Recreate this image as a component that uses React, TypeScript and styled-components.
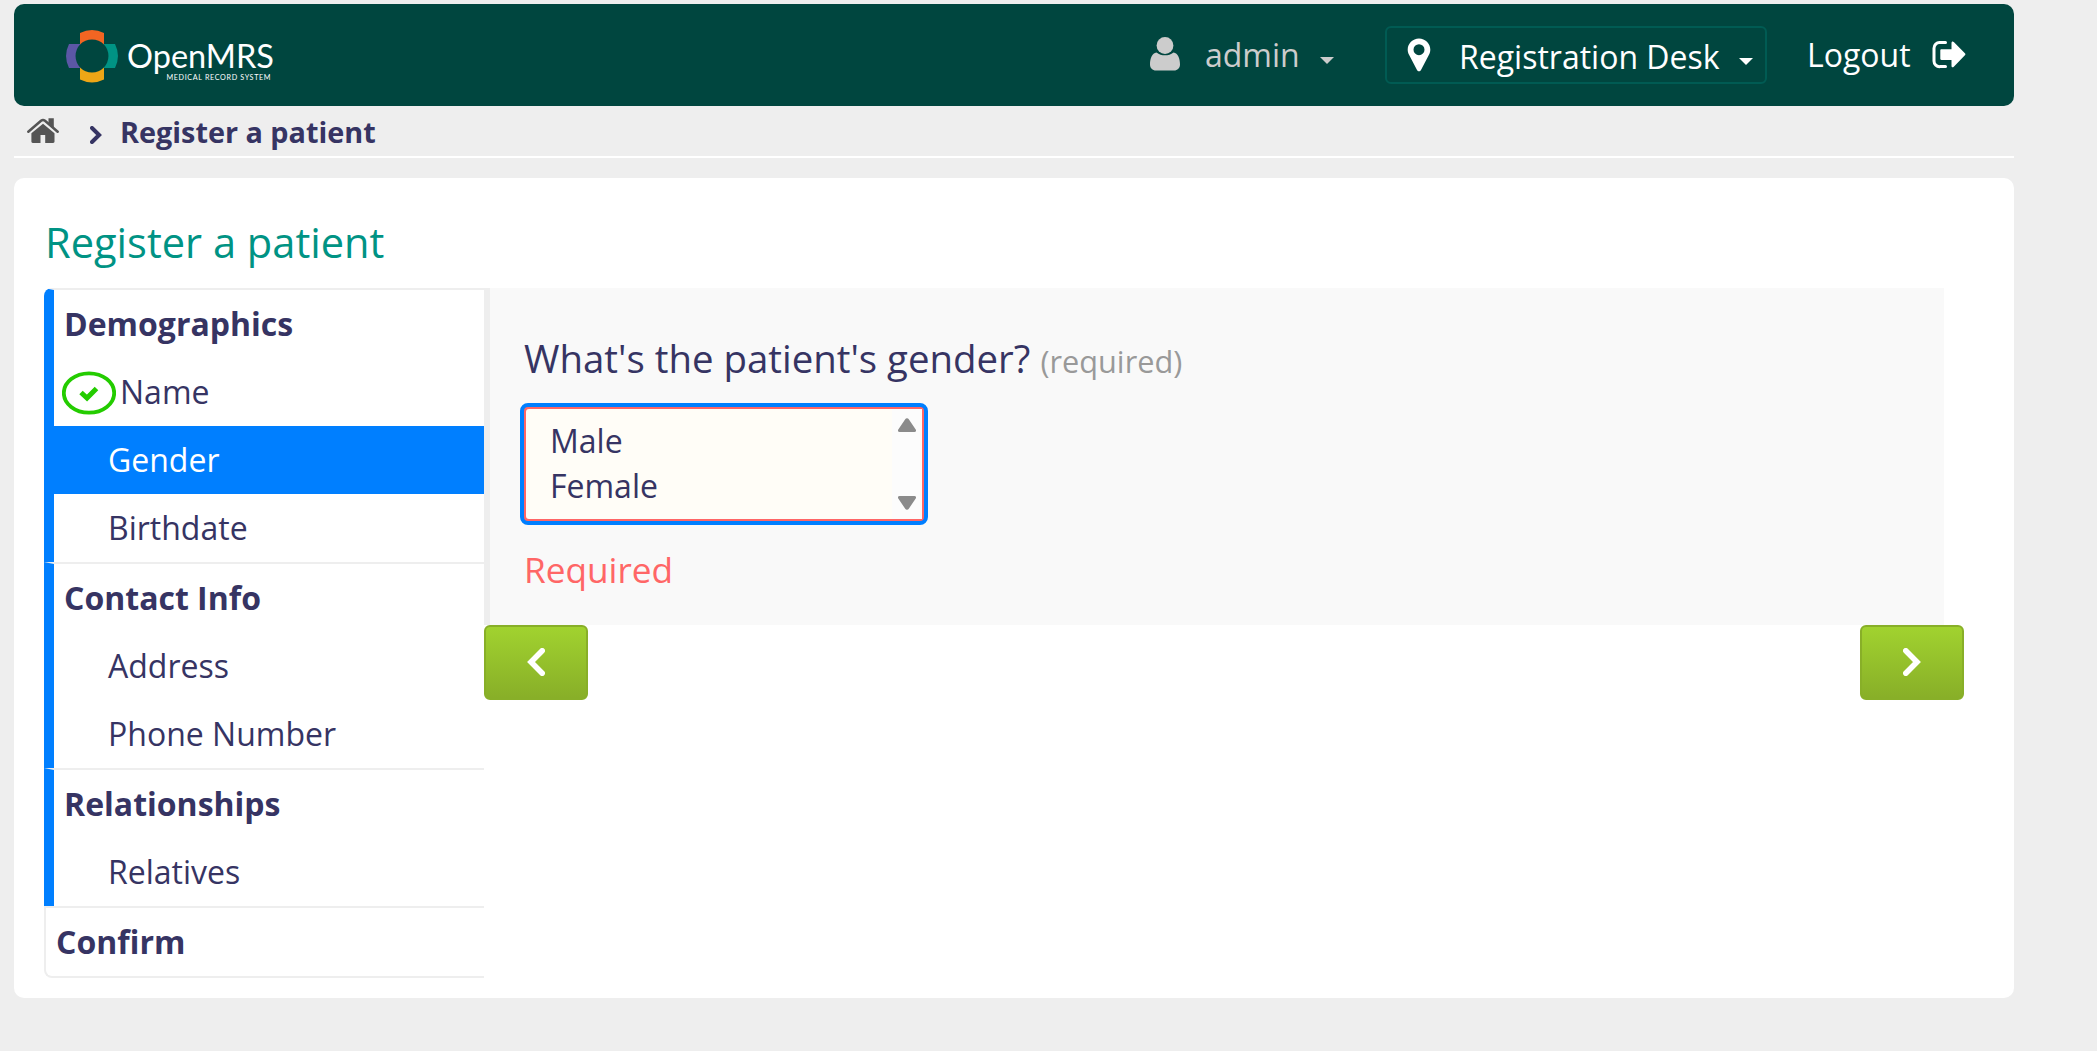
import React, { useState } from 'react';
import styled, { createGlobalStyle, css } from 'styled-components';

const GlobalStyle = createGlobalStyle`
  * { box-sizing: border-box; }
  body {
    margin: 0;
    background: #eeeeee;
    color: #363463;
    font-family: "Open Sans", "Noto Sans", sans-serif;
    font-size: 32px;
  }
  ul { list-style: none; margin: 0; padding: 0; }
  svg { display: block; flex: none; }
`;

const Page = styled.div`
  width: 2000px;
  margin: 4px 0 0 14px;
`;

const Header = styled.header`
  display: flex;
  align-items: flex-start;
  height: 102px;
  padding: 0 48px 0 52px;
  border-radius: 10px;
  background: #00463f;
  color: #ffffff;
  white-space: nowrap;
`;

const LogoLink = styled.a`
  margin: 26px auto 0 0;
`;

const UserMenu = styled.div`
  display: flex;
  align-items: center;
  height: 101px;
  margin-right: 51px;
  color: #cccccc;
`;

const LocationMenu = styled.button`
  display: flex;
  align-items: center;
  width: 382px;
  height: 58px;
  margin: 22px 39px 0 0;
  padding: 0 0 0 20px;
  border: 2px solid #005b53;
  border-radius: 6px;
  background: none;
  color: inherit;
  font: inherit;
`;

const LogoutLink = styled.a`
  display: flex;
  align-items: center;
  height: 101px;
`;

const Label = styled.span<{ $width: number; $left?: number; $top?: number }>`
  width: ${p => p.$width}px;
  margin-left: ${p => p.$left ?? 0}px;
  margin-top: ${p => p.$top ?? 0}px;
  text-align: left;
  white-space: nowrap;
`;

const Caret = styled.i`
  margin-top: 12px;
  border: 7px solid transparent;
  border-top: 7px solid currentColor;
  border-bottom: 0;
`;

const Breadcrumbs = styled.nav`
  display: flex;
  align-items: center;
  height: 52px;
  padding: 0 0 0 12px;
  border-bottom: 2px solid #ffffff;
  font-size: 28.8px;
  font-weight: 700;
  white-space: nowrap;
`;

const Card = styled.main`
  height: 820px;
  margin-top: 20px;
  padding: 30px 50px 20px 30px;
  border-radius: 10px;
  background: #ffffff;
`;

const Title = styled.h2`
  height: 80px;
  margin: 0;
  padding-left: 1px;
  color: #009384;
  font-size: 41.6px;
  font-weight: 400;
  line-height: 68px;
`;

const Columns = styled.div`
  display: flex;
  align-items: flex-start;
`;

const Sections = styled.ul`
  width: 440px;
  flex: none;
`;

const Section = styled.li<{ $first?: boolean; $last?: boolean }>`
  border-top: 2px solid #eeeeee;
  border-left: 10px solid #007fff;
  ${p => p.$first && css`border-top-left-radius: 8px;`}
  ${p => p.$last && css`
    border-left: 2px solid #eeeeee;
    border-bottom: 2px solid #eeeeee;
    border-bottom-left-radius: 8px;
  `}
`;

const SectionName = styled.div`
  height: 68px;
  padding-left: 10px;
  font-weight: 700;
  line-height: 68px;
`;

const Step = styled.div<{ $active: boolean; $done?: boolean }>`
  display: flex;
  align-items: center;
  gap: 4px;
  height: 68px;
  padding-left: ${p => (p.$done ? 8 : 54)}px;
  background: ${p => (p.$active ? '#007fff' : 'transparent')};
  color: ${p => (p.$active ? '#ffffff' : 'inherit')};
  line-height: 68px;
  cursor: pointer;
`;

const Content = styled.section`
  flex: 1;
`;

const Question = styled.div`
  width: 1460px;
  height: 337px;
  padding: 45px 0 0 30px;
  border-left: 6px solid #eeeeee;
  background: #f9f9f9;
`;

const Prompt = styled.h3`
  display: flex;
  align-items: baseline;
  gap: 10px;
  height: 70px;
  margin: 0 0 0 4px;
  font-size: 38.4px;
  font-weight: 400;
  line-height: 50px;
  white-space: nowrap;
`;

const Hint = styled.span`
  color: #999999;
  font-size: 30.72px;
`;

const ListBox = styled.div`
  display: flex;
  width: 408px;
  height: 122px;
  border: 4px solid #007fff;
  border-radius: 8px;
  background: #ff6666;
`;

const ListInner = styled.div`
  display: flex;
  flex: 1;
  margin: 2px;
  border-radius: 3px;
  background: #fffdf7;
`;

const Options = styled.div`
  flex: 1;
  padding: 9px 0 0 24px;
  line-height: 45px;
`;

const Scrollbar = styled.div`
  display: flex;
  flex-direction: column;
  align-items: center;
  justify-content: space-between;
  width: 30px;
  padding: 9px 0;
  background: #fcfcfc;
`;

const ErrorText = styled.div`
  margin: 20px 0 0 4px;
  color: #ff6666;
  font-size: 35.2px;
  line-height: 48px;
`;

const Buttons = styled.div`
  display: flex;
  justify-content: space-between;
  width: 1480px;
`;

const NavButton = styled.button`
  display: flex;
  align-items: center;
  justify-content: center;
  width: 104px;
  height: 75px;
  padding: 0 0 1px;
  border: 2px solid #88af28;
  border-radius: 6px;
  background: linear-gradient(#a1d22f, #88af28);
  color: #ffffff;
`;

const Logo = () => (
  <svg width="210" height="54" viewBox="66 30 210 54">
    <path d="M80 44.500V33a27 27 0 0 1 24 0V44.500A17 17 0 0 0 80 44.500Z" fill="#f26522" />
    <path d="M80 67.500V79.600a27 27 0 0 0 24 0V67.500A17 17 0 0 1 80 67.500Z" fill="#eea616" />
    <path d="M80.500 44H69a27 27 0 0 0 0 24H80.500A17 17 0 0 1 80.500 44Z" fill="#5b57a6" />
    <path d="M103.500 44H115a27 27 0 0 1 0 24H103.500A17 17 0 0 0 103.500 44Z" fill="#009384" />
    <text x="127" y="67.500" fontFamily="Lato, sans-serif" fontSize="32" fill="#fff" textLength="147" lengthAdjust="spacingAndGlyphs">OpenMRS</text>
    <text x="166.500" y="79.700" fontFamily="Lato, sans-serif" fontSize="7.200" fill="#fff" textLength="104" lengthAdjust="spacing">MEDICAL RECORD SYSTEM</text>
  </svg>
);

const UserIcon = () => (
  <svg width="32" height="36" viewBox="0 0 32 36" fill="currentColor">
    <circle cx="16" cy="8.500" r="8.400" />
    <path d="M7.500 15.500C10 17.500 13 18.300 16 18.300s6-.8 8.500-2.800C29 16 31 21.500 31 27.500c0 3.500-2.500 6-6 6H7c-3.500 0-6-2.500-6-6 0-6 2-11.500 6.500-12Z" />
  </svg>
);

const PinIcon = () => (
  <svg width="24" height="34" viewBox="0 0 24 34" fill="currentColor">
    <path fillRule="evenodd" d="M12 .5C18.300.5 23.300 5.500 23.300 11.500c0 2-.5 3.600-1.200 5L14 32c-.8 1.700-3.200 1.700-4 0L1.900 16.500C1.200 15.100.7 13.500.7 11.500.7 5.500 5.700.5 12 .5Zm0 5.700a5.500 5.500 0 1 0 0 11 5.500 5.500 0 0 0 0-11Z" />
  </svg>
);

const LogoutIcon = () => (
  <svg width="34" height="30" viewBox="0 0 34 30" fill="currentColor">
    <path d="M13.500 2.600H8A5.500 5.500 0 0 0 2 8.300V21A5.500 5.500 0 0 0 8 26.600h5.500" fill="none" stroke="currentColor" strokeWidth="3" strokeLinecap="round" />
    <path d="M9.500 9.300h10V3c0-1.700 1.200-2 2.300-1L32.900 13.300c.7.700.7 1.300 0 2L21.800 26.700c-1.100 1-2.300.6-2.300-1V20h-10c-.8 0-1.200-.5-1.200-1.200v-8.300c0-.8.400-1.200 1.200-1.200Z" />
  </svg>
);

const HomeIcon = () => (
  <svg width="34" height="27" viewBox="0 0 34 27" fill="#555555">
    <path d="M17 6.800 28.500 16.300V24.500c0 .9-.5 1.400-1.400 1.400H19.200V18H14.500v7.900H6.800c-.9 0-1.400-.5-1.400-1.400V16.300Z" />
    <path d="M2.300 14.800 15 3.700c1.400-1.100 2.600-1.100 4 0L31.700 14.800" fill="none" stroke="#555555" strokeWidth="2.500" strokeLinecap="round" />
    <path d="M22.500 1.200h5.300v10l-5.300-4.500Z" />
  </svg>
);

const Chevron = ({ width, height, weight, flip = false }: { width: number; height: number; weight: number; flip?: boolean }) => {
  const pad = weight * 0.5;
  const arm = flip ? width - pad : pad;
  const tip = flip ? weight * 0.72 : width - weight * 0.72;
  return (
    <svg width={width} height={height} fill="none" stroke="currentColor" strokeWidth={weight} strokeLinecap="round">
      <path d={`M${arm} ${pad} L${tip} ${height / 2} L${arm} ${height - pad}`} />
    </svg>
  );
};

const DoneIcon = () => (
  <svg width="54" height="46" viewBox="0 0 54 46" fill="none" stroke="#24cc00">
    <ellipse cx="27" cy="24" rx="25.200" ry="19.700" strokeWidth="3.800" />
    <path d="m19 23.500 6 5.500 9.500-9.500" strokeWidth="5" />
  </svg>
);

const ScrollArrow = ({ down = false }: { down?: boolean }) => (
  <svg width="18" height="14" viewBox="0 0 18 14" fill="#8b8b8b">
    <path
      d="M1.500 14h15c1.500 0 2-1.300 1.200-2.500L10.800 1.200C10 0 8 0 7.200 1.200L.3 11.500C-.5 12.700 0 14 1.500 14Z"
      transform={down ? 'rotate(180 9 7)' : undefined}
    />
  </svg>
);

const sections = [
  { name: 'Demographics', steps: ['Name', 'Gender', 'Birthdate'] },
  { name: 'Contact Info', steps: ['Address', 'Phone Number'] },
  { name: 'Relationships', steps: ['Relatives'] },
  { name: 'Confirm', steps: [] as string[] },
];

const HomeLink = styled.a`
  margin-right: 30px;
  margin-top: -1px;
`;

const CrumbText = styled.span`
  margin-left: 18px;
`;

const CrumbArrow = styled.span`
  margin-top: 8px;
`;

export default function App() {
  const [active, setActive] = useState('Gender');
  return (
    <>
      <GlobalStyle />
      <Page>
        <Header>
          <LogoLink><Logo /></LogoLink>
          <UserMenu>
            <UserIcon />
            <Label $left={24} $width={115}>admin</Label>
            <Caret />
          </UserMenu>
          <LocationMenu>
            <PinIcon />
            <Label $left={28} $top={3} $width={280}>Registration Desk</Label>
            <Caret />
          </LocationMenu>
          <LogoutLink>
            <Label $left={1} $width={125}>Logout</Label>
            <LogoutIcon />
          </LogoutLink>
        </Header>
        <Breadcrumbs>
          <HomeLink><HomeIcon /></HomeLink>
          <CrumbArrow><Chevron width={12} height={18} weight={4} /></CrumbArrow>
          <CrumbText>Register a patient</CrumbText>
        </Breadcrumbs>
        <Card>
          <Title>Register a patient</Title>
          <Columns>
            <Sections>
              {sections.map((s, i) => (
                <Section key={s.name} $first={i === 0} $last={i === sections.length - 1}>
                  <SectionName>{s.name}</SectionName>
                  {s.steps.map(step => (
                    <Step key={step} $active={step === active} $done={step === 'Name'} onClick={() => setActive(step)}>
                      {step === 'Name' && <DoneIcon />}
                      <span>{step}</span>
                    </Step>
                  ))}
                </Section>
              ))}
            </Sections>
            <Content>
              <Question>
                <Prompt>What's the patient's gender? <Hint>(required)</Hint></Prompt>
                <ListBox>
                  <ListInner>
                    <Options>
                      <div>Male</div>
                      <div>Female</div>
                    </Options>
                    <Scrollbar>
                      <ScrollArrow />
                      <ScrollArrow down />
                    </Scrollbar>
                  </ListInner>
                </ListBox>
                <ErrorText>Required</ErrorText>
              </Question>
              <Buttons>
                <NavButton><Chevron width={18} height={28} weight={5.6} flip /></NavButton>
                <NavButton><Chevron width={18} height={28} weight={5.6} /></NavButton>
              </Buttons>
            </Content>
          </Columns>
        </Card>
      </Page>
    </>
  );
}
